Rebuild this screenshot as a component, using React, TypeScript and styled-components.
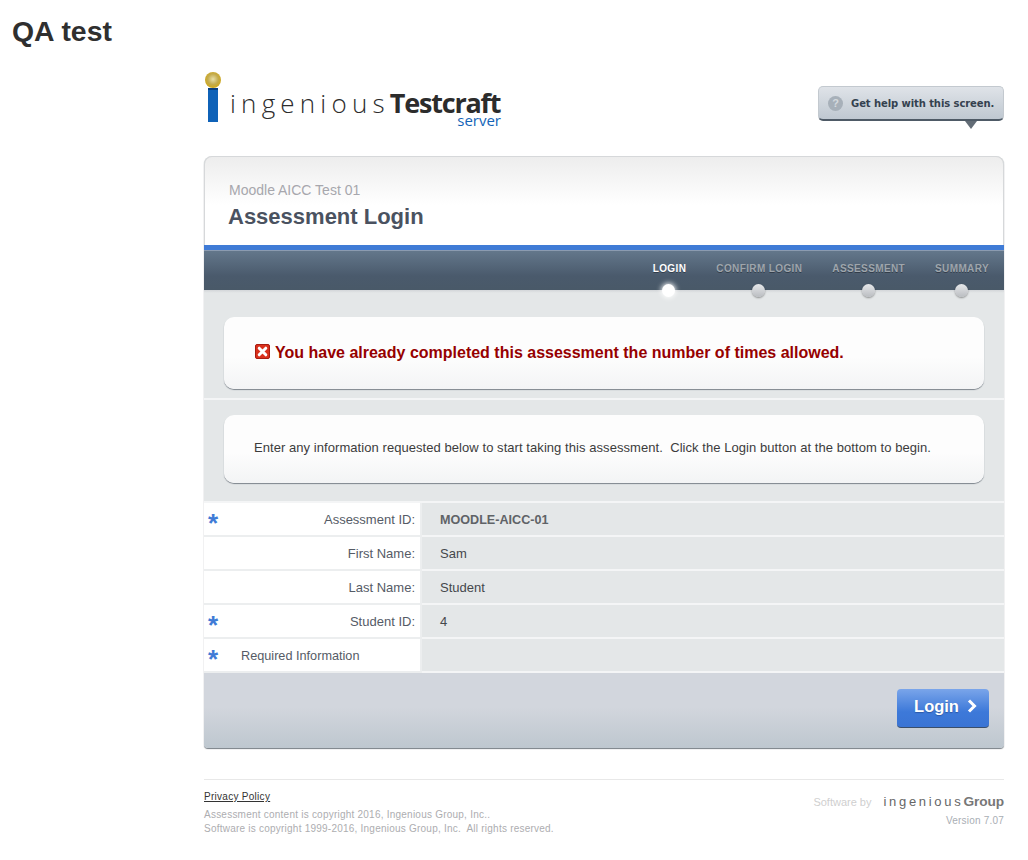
import * as React from 'react';
import styled, { createGlobalStyle } from 'styled-components';

const Sans = `"Liberation Sans", Arial, sans-serif`;
const Brand = `"Open Sans", "Noto Sans", sans-serif`;

const GlobalStyle = createGlobalStyle`
  html, body { margin: 0; padding: 0; background: #fff; }
  body { font-family: ${Sans}; color: #333; }
`;

const Title = styled.h1`
  margin: 0;
  padding: 15px 0 0 12px;
  height: 57px;
  box-sizing: border-box;
  font: bold 28.4px/32px ${Sans};
  color: #2f2f2f;
`;

const Page = styled.div`
  width: 800px;
  margin-left: 204px;
`;

const Masthead = styled.div`
  height: 99px;
  display: flex;
  justify-content: space-between;
  align-items: flex-start;
`;

const Logo = styled.div`
  position: relative;
  width: 300px;
  height: 60px;
  margin-top: 15px;
  display: flex;
  align-items: flex-start;
`;

const LogoWords = styled.div`
  display: flex;
  align-items: baseline;
  margin: 21px 0 0 26px;
  font-family: ${Brand};
  line-height: 20px;
  white-space: nowrap;
`;

const LogoLight = styled.span<{ $small?: boolean }>`
  font-size: ${p => (p.$small ? '13px' : '26px')};
  letter-spacing: ${p => (p.$small ? '2.7px' : '5.2px')};
  font-weight: 300;
  color: ${p => (p.$small ? '#666' : '#2c2c2c')};
`;

const LogoBold = styled.span<{ $small?: boolean }>`
  font-size: ${p => (p.$small ? '13.7px' : '27px')};
  font-weight: 700;
  letter-spacing: ${p => (p.$small ? '-0.1px' : '-1.2px')};
  color: ${p => (p.$small ? '#777' : '#2c2c2c')};
`;

const LogoServer = styled.span`
  position: absolute;
  right: 3px;
  top: 41px;
  font: 500 15px/14px ${Brand};
  color: #1565b8;
`;

const HelpButton = styled.a`
  position: relative;
  margin-top: 29px;
  width: 186px;
  height: 35px;
  box-sizing: border-box;
  display: flex;
  align-items: center;
  gap: 8px;
  padding: 1px 0 0 9px;
  border: 1px solid #c3c9cf;
  border-bottom: 2px solid #4e5a66;
  border-radius: 5px;
  background: linear-gradient(#dfe3e8, #bfc8d1);
  font: bold 10px/14px "DejaVu Sans", Verdana, sans-serif;
  letter-spacing: -0.08px;
  color: #34414f;
  white-space: nowrap;
  &::after {
    content: '';
    position: absolute;
    right: 26px;
    bottom: -10px;
    border-left: 6px solid transparent;
    border-right: 6px solid transparent;
    border-top: 8px solid #626c76;
  }
`;

const HelpIcon = styled.span`
  width: 15px;
  height: 15px;
  flex: none;
  border-radius: 50%;
  background: #a7b0b9;
  color: #d5dade;
  font: bold 11px/15px ${Sans};
  text-align: center;
`;

const Card = styled.div`
  border-radius: 8px 8px 4px 4px;
  box-shadow: 0 1px 1px rgba(60, 70, 80, 0.7);
  background: #e4e7e8;
`;

const Header = styled.div`
  height: 89px;
  box-sizing: border-box;
  padding: 25px 24px 0;
  border: 1px solid #d6d8da;
  border-bottom: 0;
  border-radius: 8px 8px 0 0;
  background: linear-gradient(#ededed 0, #ffffff 48px);
`;

const CourseName = styled.div`
  font: 14px/17px ${Sans};
  color: #a7a7ad;
`;

const PageName = styled.h2`
  margin: 5px 0 0 -1px;
  font: bold 22px/26px ${Sans};
  color: #4a5260;
`;

const Nav = styled.div`
  height: 45px;
  box-sizing: border-box;
  border-top: 5px solid #3f7bd6;
  display: flex;
  justify-content: flex-end;
  padding-right: 15px;
  gap: 30px;
  background: linear-gradient(#64788c 0, #4a5a6c 26px, #495968 100%);
  box-shadow: inset 0 1px 0 #8b9bb0;
`;

const Step = styled.div<{ $active?: boolean }>`
  position: relative;
  padding-top: 12px;
  font: bold 10px/13px ${Sans};
  letter-spacing: 0.38px;
  color: ${p => (p.$active ? '#fff' : '#9ea5ac')};
  text-shadow: 0 1px 0 rgba(0, 0, 0, 0.35);
  &::after {
    content: '';
    position: absolute;
    left: 50%;
    bottom: -7px;
    width: 13px;
    height: 13px;
    margin-left: -7px;
    border-radius: 50%;
    z-index: 1;
    background: ${p => (p.$active ? '#fff' : 'linear-gradient(#e6e8ea, #babdc1)')};
    box-shadow: ${p => (p.$active ? '0 0 5px 1px rgba(255,255,255,0.9)' : '0 1px 2px rgba(0,0,0,0.4)')};
  }
`;

const Band = styled.div<{ $top: number; $bottom: number; $shade?: boolean }>`
  padding: ${p => p.$top}px 20px ${p => p.$bottom}px;
  background: ${p => (p.$shade ? 'linear-gradient(#d3d6d9, #e4e7e8 3px)' : '#e4e7e8')};
  border-bottom: 2px solid #f4f5f6;
`;

const MessageBox = styled.div<{ $height: number }>`
  height: ${p => p.$height}px;
  box-sizing: border-box;
  display: flex;
  align-items: center;
  gap: 5px;
  padding-left: 30px;
  border-radius: 10px;
  background: linear-gradient(#fdfdfd 55%, #f3f4f5);
  box-shadow: 0 1px 1px 0 #7d848c;
`;

const ErrorText = styled.span`
  font: bold 16px/20px ${Sans};
  color: #960000;
`;

const ErrorIcon = styled.svg`
  flex: none;
  margin: -3px 0 0 1px;
`;

const InfoText = styled.span`
  font: 13px/20px ${Sans};
  letter-spacing: 0.06px;
  color: #3c3c3c;
  margin-top: -3px;
`;

const Rows = styled.div`
  display: grid;
  grid-template-columns: 218px 1fr;
  background: #e4e7e8;
`;

const LabelCell = styled.div<{ $left?: boolean }>`
  position: relative;
  height: 34px;
  box-sizing: border-box;
  display: flex;
  align-items: center;
  justify-content: ${p => (p.$left ? 'flex-start' : 'flex-end')};
  padding: 2px 5px 0 ${p => (p.$left ? '37px' : '0')};
  background: #fff;
  border-right: 2px solid #eceeef;
  border-bottom: 2px solid #eceeef;
  font: ${p => (p.$left ? '12.7px' : '13px')}/16px ${Sans};
  color: #555b66;
`;

const ValueCell = styled.div<{ $bold?: boolean }>`
  height: 34px;
  box-sizing: border-box;
  display: flex;
  align-items: center;
  padding: 2px 0 0 18px;
  border-bottom: 2px solid #f4f5f6;
  font: ${p => (p.$bold ? 'bold 12.6px' : 'normal 13px')}/16px ${Sans};
  color: ${p => (p.$bold ? '#5f6367' : '#44484c')};
`;

const Star = styled.span`
  position: absolute;
  left: 4px;
  top: 7px;
  font: bold 26px/26px ${Sans};
  color: #3f7bd6;
`;

const ActionBar = styled.div`
  height: 75px;
  box-sizing: border-box;
  display: flex;
  justify-content: flex-end;
  padding: 16px 15px 0 0;
  border-radius: 0 0 4px 4px;
  background: linear-gradient(#d2d6dd 0, #d2d6dd 45%, #bec7cf 100%);
`;

const LoginButton = styled.a`
  width: 92px;
  height: 39px;
  box-sizing: border-box;
  display: flex;
  align-items: center;
  justify-content: center;
  gap: 8px;
  padding: 0 0 4px 6px;
  border-radius: 4px;
  border-bottom: 1px solid #3a4e6a;
  background: linear-gradient(#7aa5ea, #3d79d9 60%, #3a74d4);
  font: bold 16.5px/20px ${Sans};
  color: #fff;
  text-shadow: 0 1px 1px rgba(30, 60, 120, 0.5);
`;

const Footer = styled.div`
  margin-top: 31px;
  border-top: 1px solid #e8e8e8;
  padding-top: 11px;
  display: flex;
  justify-content: space-between;
`;

const PrivacyLink = styled.a`
  display: block;
  font: 10px/12px ${Sans};
  letter-spacing: 0.28px;
  color: #333;
  text-decoration: underline;
`;

const Legal = styled.div`
  margin-top: 5px;
  font: 10px/14px ${Sans};
  letter-spacing: 0.23px;
  color: #adadb0;
  white-space: pre;
`;

const Credits = styled.div`
  text-align: right;
`;

const SoftwareBy = styled.div`
  display: flex;
  justify-content: flex-end;
  align-items: baseline;
  gap: 12px;
  margin-top: 2px;
  font: 11px/18px ${Sans};
  color: #cfcfcf;
`;

const Version = styled.div`
  margin-top: 3px;
  font: 10px/14px ${Sans};
  letter-spacing: 0.2px;
  color: #a9aeb4;
`;

const steps = ['LOGIN', 'CONFIRM LOGIN', 'ASSESSMENT', 'SUMMARY'];

const rows = [
  { label: 'Assessment ID:', value: 'MOODLE-AICC-01', star: true, bold: true },
  { label: 'First Name:', value: 'Sam' },
  { label: 'Last Name:', value: 'Student' },
  { label: 'Student ID:', value: '4', star: true },
];

const LogoMark = () => (
  <svg width="18" height="52" viewBox="0 0 18 52" style={{ position: 'absolute', left: 0, top: 0 }}>
    <defs>
      <radialGradient id="ball" cx="50%" cy="45%" r="55%">
        <stop offset="0" stopColor="#e8e0a8" />
        <stop offset="0.6" stopColor="#c4ab4c" />
        <stop offset="1" stopColor="#d0a818" />
      </radialGradient>
    </defs>
    <circle cx="9" cy="8" r="8" fill="url(#ball)" />
    <path d="M4 16 H14 V50 H4 Z" fill="#0f62b8" />
    <path d="M4 16 H14 V18 H4 Z" fill="#0a3f80" />
  </svg>
);

const CrossIcon = () => (
  <ErrorIcon width="15" height="15" viewBox="0 0 15 15">
    <rect x="0.5" y="0.5" width="14" height="14" rx="1.5" fill="#d9301c" stroke="#a81c10" />
    <path d="M4.2 4.2 L10.8 10.8 M10.8 4.2 L4.2 10.8" stroke="#fff" strokeWidth="3" strokeLinecap="round" />
  </ErrorIcon>
);

const Chevron = () => (
  <svg width="11" height="14" viewBox="0 0 11 14">
    <path d="M2 1.5 L7.5 7 L2 12.5" fill="none" stroke="#fff" strokeWidth="3" />
  </svg>
);

export default function App() {
  return (
    <>
      <GlobalStyle />
      <Title>QA test</Title>
      <Page>
        <Masthead>
          <Logo>
            <LogoMark />
            <LogoWords>
              <LogoLight>ingenious</LogoLight>
              <LogoBold>Testcraft</LogoBold>
            </LogoWords>
            <LogoServer>server</LogoServer>
          </Logo>
          <HelpButton>
            <HelpIcon>?</HelpIcon>
            Get help with this screen.
          </HelpButton>
        </Masthead>
        <Card>
          <Header>
            <CourseName>Moodle AICC Test 01</CourseName>
            <PageName>Assessment Login</PageName>
          </Header>
          <Nav>
            {steps.map((s, i) => (
              <Step key={s} $active={i === 0}>{s}</Step>
            ))}
          </Nav>
          <Band $top={27} $bottom={9} $shade>
            <MessageBox $height={72}>
              <CrossIcon />
              <ErrorText>You have already completed this assessment the number of times allowed.</ErrorText>
            </MessageBox>
          </Band>
          <Band $top={15} $bottom={18}>
            <MessageBox $height={68}>
              <InfoText>Enter any information requested below to start taking this assessment.&nbsp; Click the Login button at the bottom to begin.</InfoText>
            </MessageBox>
          </Band>
          <Rows>
            {rows.map(r => (
              <React.Fragment key={r.label}>
                <LabelCell>
                  {r.star ? <Star>*</Star> : null}
                  {r.label}
                </LabelCell>
                <ValueCell $bold={r.bold}>{r.value}</ValueCell>
              </React.Fragment>
            ))}
            <LabelCell $left>
              <Star>*</Star>
              Required Information
            </LabelCell>
            <ValueCell />
          </Rows>
          <ActionBar>
            <LoginButton>
              Login <Chevron />
            </LoginButton>
          </ActionBar>
        </Card>
        <Footer>
          <div>
            <PrivacyLink>Privacy Policy</PrivacyLink>
            <Legal>{'Assessment content is copyright 2016, Ingenious Group, Inc..\nSoftware is copyright 1999-2016, Ingenious Group, Inc.  All rights reserved.'}</Legal>
          </div>
          <Credits>
            <SoftwareBy>
              Software by
              <span>
                <LogoLight $small>ingenious</LogoLight>
                <LogoBold $small>Group</LogoBold>
              </span>
            </SoftwareBy>
            <Version>Version 7.07</Version>
          </Credits>
        </Footer>
      </Page>
    </>
  );
}
